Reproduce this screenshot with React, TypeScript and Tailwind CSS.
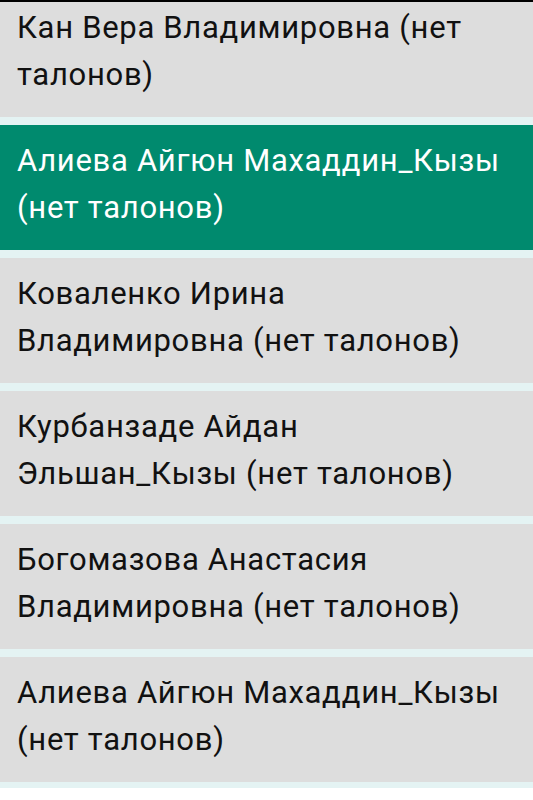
import React from 'react';

type Person = {
	name: string;
	selected?: boolean;
};

const people: Person[] = [
	{ name: 'Кан Вера Владимировна (нет талонов)' },
	{ name: 'Алиева Айгюн Махаддин_Кызы (нет талонов)', selected: true },
	{ name: 'Коваленко Ирина Владимировна (нет талонов)' },
	{ name: 'Курбанзаде Айдан Эльшан_Кызы (нет талонов)' },
	{ name: 'Богомазова Анастасия Владимировна (нет талонов)' },
	{ name: 'Алиева Айгюн Махаддин_Кызы (нет талонов)' },
];

function PersonRow({ person }: { person: Person }) {
	return (
		<div
			className={
				person.selected
					? 'h-[125px] shrink-0 bg-[#008a6e] px-[17px] pt-[12px] text-white'
					: 'h-[125px] shrink-0 bg-[#dddddd] px-[17px] pt-[12px] text-[#111111]'
			}
		>
			<div className="text-[31px] leading-[47px] tracking-[0.7px]">{person.name}</div>
		</div>
	);
}

export default function App() {
	return (
		<div
			className="h-[800px] w-[533px] overflow-hidden bg-white"
			style={{ fontFamily: 'Roboto, "Noto Sans", sans-serif' }}
		>
			{/* top edge of the toolbar above the list */}
			<div className="relative z-10 h-[2px] bg-black" />

			{/* list is scrolled a little, first row partly hidden */}
			<div className="-mt-[10px] flex flex-col gap-[8px] bg-[#e4f3f3] pb-[6px]">
				{people.map((p, i) => (
					<PersonRow key={i} person={p} />
				))}
			</div>
		</div>
	);
}
